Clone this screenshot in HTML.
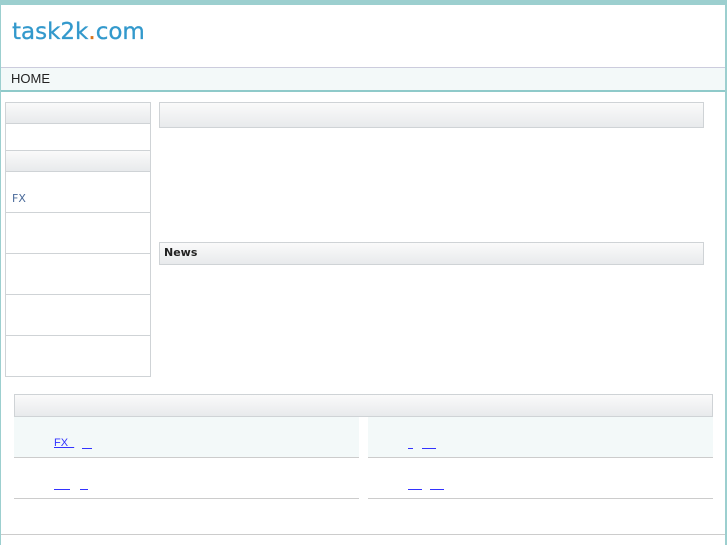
<!DOCTYPE html><html><head><meta charset="utf-8"><style>
body{margin:0;width:727px;height:545px;background:#fff;font-family:"Liberation Sans",sans-serif;position:relative;overflow:hidden}
div{position:absolute;box-sizing:border-box}
.g{background:linear-gradient(#fafafa,#e8eaec);border:1px solid #cfd3d6}
.s{border:1px solid #cfd3d6;border-top:none}
a{color:#33f;font-size:11px;position:absolute}
</style></head><body>
<div style="left:0;top:0;width:727px;height:545px;border-left:1px solid #9ccfcf;border-right:2px solid #9ccfcf"></div>
<div style="left:0;top:0;width:727px;height:5px;background:#9ccfcf"></div>
<div style="left:12px;top:19px;font-size:23px;color:#3399cc;font-family:'DejaVu Sans',sans-serif;-webkit-text-stroke:0.3px #3399cc">task2k<span style="color:#d9731a;-webkit-text-stroke:0.3px #d9731a">.</span>com</div>
<div style="left:1px;top:67px;width:724px;height:25px;background:#f3f9f9;border-top:1px solid #ccd;border-bottom:2px solid #8fcaca"></div>
<div style="left:11px;top:71px;font-size:13px;color:#222">HOME</div>
<div class="g" style="left:5px;top:102px;width:146px;height:22px"></div>
<div class="s" style="left:5px;top:124px;width:146px;height:27px"></div>
<div class="g" style="left:5px;top:150px;width:146px;height:22px"></div>
<div class="s" style="left:5px;top:172px;width:146px;height:41px"></div>
<div style="left:12px;top:192px;font-size:11px;color:#4a6a9a;font-family:'DejaVu Sans',sans-serif">FX</div>
<div class="s" style="left:5px;top:213px;width:146px;height:41px"></div>
<div class="s" style="left:5px;top:254px;width:146px;height:41px"></div>
<div class="s" style="left:5px;top:295px;width:146px;height:41px"></div>
<div class="s" style="left:5px;top:336px;width:146px;height:41px"></div>
<div class="g" style="left:159px;top:102px;width:545px;height:26px"></div>
<div class="g" style="left:159px;top:242px;width:545px;height:23px"></div>
<div style="left:164px;top:246px;font-size:11px;font-weight:bold;color:#222;font-family:'DejaVu Sans',sans-serif">News</div>
<div class="g" style="left:14px;top:394px;width:699px;height:23px"></div>
<div style="left:14px;top:417px;width:345px;height:41px;background:#f3f9f9;border-bottom:1px solid #ccc"></div>
<div style="left:368px;top:417px;width:345px;height:41px;background:#f3f9f9;border-bottom:1px solid #ccc"></div>
<div style="left:14px;top:458px;width:345px;height:41px;border-bottom:1px solid #ccc"></div>
<div style="left:368px;top:458px;width:345px;height:41px;border-bottom:1px solid #ccc"></div>
<a style="left:54px;top:437px;text-decoration:underline">FX&nbsp;&nbsp;</a>
<div style="left:82px;top:448px;width:10px;height:1px;background:#33f"></div>
<div style="left:408px;top:448px;width:5px;height:1px;background:#33f"></div>
<div style="left:422px;top:448px;width:14px;height:1px;background:#33f"></div>
<div style="left:54px;top:489px;width:16px;height:1px;background:#33f"></div>
<div style="left:80px;top:489px;width:8px;height:1px;background:#33f"></div>
<div style="left:408px;top:489px;width:14px;height:1px;background:#33f"></div>
<div style="left:430px;top:489px;width:14px;height:1px;background:#33f"></div>
<div style="left:1px;top:534px;width:724px;height:1px;background:#ccc"></div>
</body></html>
